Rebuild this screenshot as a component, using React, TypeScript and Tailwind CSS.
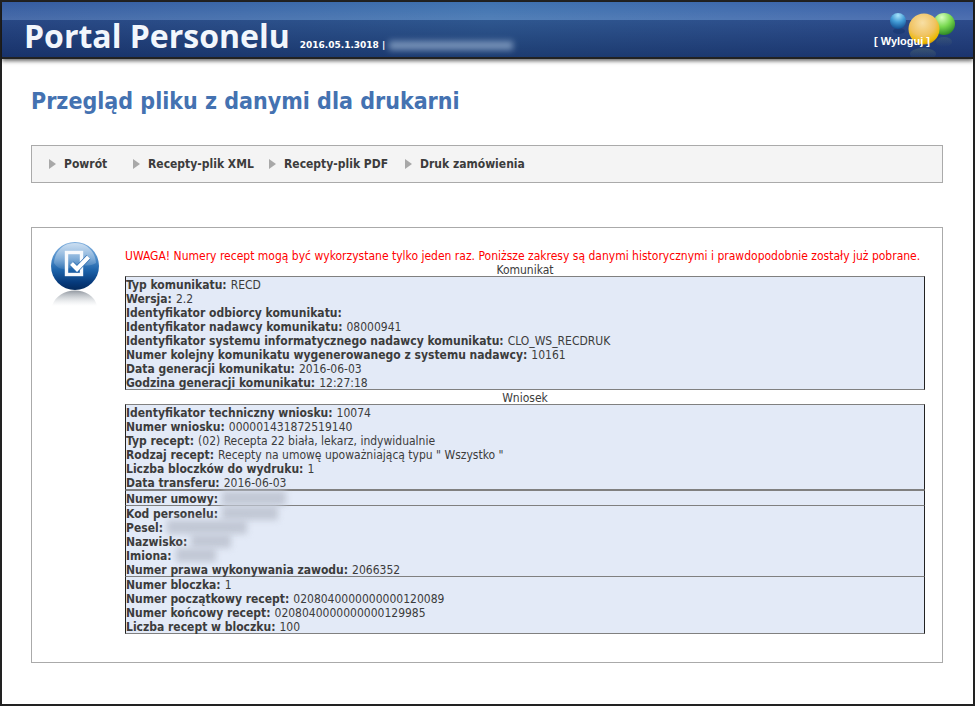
type Row = { label: string; value?: string; hidden?: string };

const messageRows: Row[] = [
  { label: 'Typ komunikatu:', value: 'RECD' },
  { label: 'Wersja:', value: '2.2' },
  { label: 'Identyfikator odbiorcy komunikatu:' },
  { label: 'Identyfikator nadawcy komunikatu:', value: '08000941' },
  { label: 'Identyfikator systemu informatycznego nadawcy komunikatu:', value: 'CLO_WS_RECDRUK' },
  { label: 'Numer kolejny komunikatu wygenerowanego z systemu nadawcy:', value: '10161' },
  { label: 'Data generacji komunikatu:', value: '2016-06-03' },
  { label: 'Godzina generacji komunikatu:', value: '12:27:18' },
];

const requestRows: Row[] = [
  { label: 'Identyfikator techniczny wniosku:', value: '10074' },
  { label: 'Numer wniosku:', value: '000001431872519140' },
  { label: 'Typ recept:', value: '(02) Recepta 22 biała, lekarz, indywidualnie' },
  { label: 'Rodzaj recept:', value: 'Recepty na umowę upoważniającą typu " Wszystko "' },
  { label: 'Liczba bloczków do wydruku:', value: '1' },
  { label: 'Data transferu:', value: '2016-06-03' },
];

const contractRows: Row[] = [{ label: 'Numer umowy:', hidden: 'w-16' }];

const personRows: Row[] = [
  { label: 'Kod personelu:', hidden: 'w-14' },
  { label: 'Pesel:', hidden: 'w-20' },
  { label: 'Nazwisko:', hidden: 'w-10' },
  { label: 'Imiona:', hidden: 'w-10' },
  { label: 'Numer prawa wykonywania zawodu:', value: '2066352' },
];

const blockRows: Row[] = [
  { label: 'Numer bloczka:', value: '1' },
  { label: 'Numer początkowy recept:', value: '0208040000000000120089' },
  { label: 'Numer końcowy recept:', value: '0208040000000000129985' },
  { label: 'Liczba recept w bloczku:', value: '100' },
];

const links = [
  { text: 'Powrót', width: 'w-[84px]' },
  { text: 'Recepty-plik XML', width: 'w-[136px]' },
  { text: 'Recepty-plik PDF', width: 'w-[136px]' },
  { text: 'Druk zamówienia', width: 'w-[136px]' },
];

function Rows({ rows, className }: { rows: Row[]; className: string }) {
  return (
    <dl className={`border-x border-x-[#222] border-y-[#808080] bg-[#e3eaf7] ${className}`}>
      {rows.map((row) => (
        <div key={row.label} className="flex h-[14px] gap-1 whitespace-nowrap">
          <dt className="font-bold">{row.label}</dt>
          <dd>
            {row.value}
            {row.hidden && <span className={`block h-[14px] bg-[#c2c8d5] blur-[3px] ${row.hidden}`} />}
          </dd>
        </div>
      ))}
    </dl>
  );
}

function Balls() {
  return (
    <svg width="68" height="50" viewBox="0 0 68 50" aria-hidden="true">
      <defs>
        <radialGradient id="blueBall" cx="0.5" cy="0.15" r="0.85">
          <stop offset="0" stopColor="#a9e4fb" />
          <stop offset="0.5" stopColor="#429bd5" />
          <stop offset="1" stopColor="#124e91" />
        </radialGradient>
        <radialGradient id="greenBall" cx="0.4" cy="0.2" r="0.85">
          <stop offset="0" stopColor="#d7ffc0" />
          <stop offset="0.5" stopColor="#78d84f" />
          <stop offset="1" stopColor="#268120" />
        </radialGradient>
        <radialGradient id="goldBall" cx="0.45" cy="0.3" r="0.75">
          <stop offset="0" stopColor="#f8dfa4" />
          <stop offset="0.55" stopColor="#f0c362" />
          <stop offset="0.85" stopColor="#edb900" />
          <stop offset="1" stopColor="#ad7c18" />
        </radialGradient>
        <linearGradient id="ballMirror" x1="0" y1="0" x2="0" y2="1">
          <stop offset="0" stopColor="#7e966b" stopOpacity="0.4" />
          <stop offset="1" stopColor="#7e966b" stopOpacity="0" />
        </linearGradient>
      </defs>
      <ellipse cx="54" cy="35" rx="8" ry="5" fill="url(#ballMirror)" opacity="0.5" />
      <ellipse cx="33" cy="47" rx="13" ry="6" fill="url(#ballMirror)" opacity="0.7" />
      <ellipse cx="9" cy="24" rx="6" ry="3" fill="#0d2c66" opacity="0.4" />
      <circle cx="8" cy="14" r="8" fill="url(#blueBall)" />
      <circle cx="54" cy="17" r="11" fill="url(#greenBall)" />
      <circle cx="34" cy="22" r="15.500" fill="url(#goldBall)" />
    </svg>
  );
}

function CheckBadge() {
  return (
    <svg width="50" height="68" viewBox="0 -1 50 68" aria-hidden="true">
      <defs>
        <linearGradient id="badge" x1="0" y1="0" x2="0" y2="1">
          <stop offset="0" stopColor="#7eaedd" />
          <stop offset="0.35" stopColor="#4c8bc8" />
          <stop offset="0.6" stopColor="#1b61a8" />
          <stop offset="0.85" stopColor="#06397a" />
          <stop offset="1" stopColor="#042a5c" />
        </linearGradient>
        <linearGradient id="badgeShine" x1="0" y1="0" x2="0" y2="1">
          <stop offset="0" stopColor="#fff" stopOpacity="0.6" />
          <stop offset="1" stopColor="#fff" stopOpacity="0.08" />
        </linearGradient>
        <linearGradient id="badgeMirror" x1="0" y1="0" x2="0" y2="1">
          <stop offset="0" stopColor="#6d7681" stopOpacity="0.75" />
          <stop offset="1" stopColor="#c5ccd3" stopOpacity="0" />
        </linearGradient>
      </defs>
      <path d="M2 65 C5 55 15 49.500 25 49.500 C35 49.500 45 55 47 65 Z" fill="url(#badgeMirror)" />
      <circle cx="25" cy="25" r="24" fill="url(#badge)" />
      <path d="M4 22 C5 9 14 2 25 2 C36 2 45 9 46 22 C38 27 30 22 20 27 C13 30 7 27 4 22 Z" fill="url(#badgeShine)" />
      <rect x="16.500" y="11.500" width="15" height="22" fill="none" stroke="#f6f9fd" strokeWidth="3.400" />
      <path d="M21.500 22.500 L27 28 L38.500 16" fill="none" stroke="#2a6bb0" strokeWidth="5.500" />
      <path d="M21.500 22.500 L27 28 L38.500 16" fill="none" stroke="#fff" strokeWidth="4.200" />
    </svg>
  );
}

export default function App() {
  return (
    <div className="flex min-h-screen flex-col border-2 border-[#222] bg-white font-['DejaVu_Sans_Condensed','DejaVu_Sans',sans-serif] text-xs leading-4 text-[#3c3c3c]">
      <header className="relative flex h-[57px] items-stretch justify-between border-b-2 border-[#222] bg-[linear-gradient(to_bottom,rgba(255,255,255,0)_0px,rgba(255,255,255,0.1)_18px,rgba(0,10,50,0.26)_18px,rgba(0,15,60,0.54)_55px),linear-gradient(to_right,#355ca0,#3f72b0_50%,#3b60a8)] pr-[15px] pl-[22px] text-white shadow-[0_2px_4px_rgba(0,0,0,0.6)]">
        <div className="flex items-baseline gap-[10px] pt-[14px] whitespace-nowrap">
          <h1 className="font-['Open_Sans',sans-serif] text-[32px] leading-[40px] font-bold text-[#f2f6fc]">Portal Personelu</h1>
          <p className="flex items-center gap-1 font-['DejaVu_Sans',sans-serif] text-[9px] font-bold">
            2016.05.1.3018 |
            <span className="block h-[9px] w-[124px] bg-[#8ca6c8] opacity-80 blur-[3px]" />
          </p>
        </div>
        <div className="relative pt-[5px]">
          <Balls />
          <a href="#wyloguj" className="absolute top-[31px] right-7 font-['Liberation_Sans',sans-serif] text-[11px] leading-4 font-bold whitespace-nowrap">
            [ Wyloguj ]
          </a>
        </div>
      </header>

      <main className="flex flex-col pr-[30px] pb-10 pl-[29px]">
        <h2 className="mt-7 text-[23px] leading-[28px] font-bold text-[#4472b1]">
          Przegląd pliku z danymi dla drukarni
        </h2>

        <nav className="mt-[30px] flex h-[38px] items-center border border-[#aaa] bg-[#f4f4f4] pl-[17px] font-bold">
          {links.map((link) => (
            <a key={link.text} href="#menu" className={`flex items-center gap-2 whitespace-nowrap ${link.width}`}>
              <svg width="7" height="10" viewBox="0 0 7 10" className="shrink-0" aria-hidden="true">
                <path d="M0 0 L7 5 L0 10 Z" fill="#a8a8a8" />
              </svg>
              {link.text}
            </a>
          ))}
        </nav>

        <section className="mt-11 flex gap-6 border border-[#aaa] pt-5 pr-[17px] pb-7 pl-[18px]">
          <div className="-mt-2 w-[51px] shrink-0">
            <CheckBadge />
          </div>
          <div className="min-w-0 grow">
            <p className="h-[14px] whitespace-nowrap text-[#ff0000]">
              UWAGA! Numery recept mogą być wykorzystane tylko jeden raz. Poniższe zakresy są danymi historycznymi i prawdopodobnie zostały już pobrane.
            </p>
            <h3 className="h-[14px] text-center">Komunikat</h3>
            <Rows rows={messageRows} className="border-y" />
            <h3 className="h-[14px] text-center">Wniosek</h3>
            <Rows rows={requestRows} className="border-y" />
            <Rows rows={contractRows} className="border-y" />
            <Rows rows={personRows} className="border-b" />
            <Rows rows={blockRows} className="border-b" />
          </div>
        </section>
      </main>
    </div>
  );
}
